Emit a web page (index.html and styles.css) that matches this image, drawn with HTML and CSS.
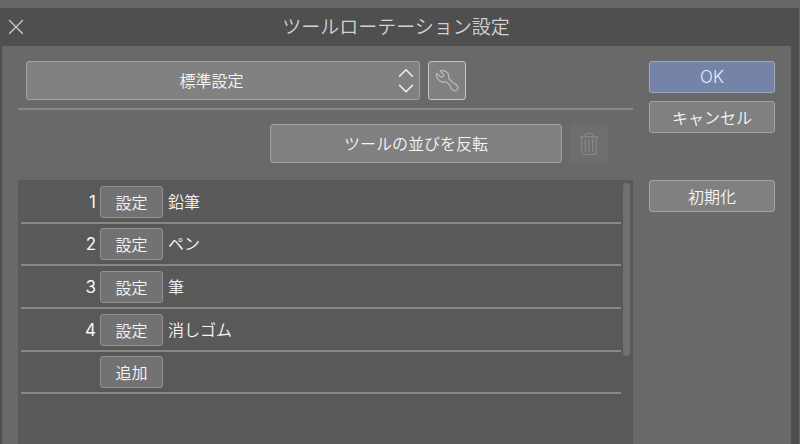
FILE: index.html
```html
<!DOCTYPE html>
<html lang="ja">
<head>
  <meta charset="UTF-8">
  <title>ツールローテーション設定</title>
  <meta name="viewport" content="width=device-width, initial-scale=1.0">
  <link rel="stylesheet" href="styles.css">
</head>
<body>

<div class="dialog">
  <div class="titlebar">
    <svg class="close" width="16" height="16" viewBox="0 0 16 16"><path d="M1.5 1.5L14.5 14.5M14.5 1.5L1.5 14.5"/></svg>
    <h1 class="title">ツールローテーション設定</h1>
  </div>

  <div class="content">
    <div class="main">
      <div class="preset">
        <div class="select">
          <span class="select-text">標準設定</span>
          <svg class="arrows" width="16" height="26" viewBox="0 0 16 26"><path d="M1.5 8.3L8 1.8L14.5 8.3M1.5 17.3L8 23.8L14.5 17.3"/></svg>
        </div>
        <div class="icon-button">
          <svg class="wrench" width="24" height="24" viewBox="0 0 24 24"><path d="M5.1 2.1C8.9 .2 13.7 2.9 13.7 7.4C13.7 8.9 13.5 9.5 14.5 10.4L17.4 13.2C18.2 14 18.9 14 20 14.6L22.4 17C24 19.3 21 23 18.5 21.4L16.2 19.2C15.3 18.2 15.7 17.2 14.8 16.3L11.7 13.3C10.8 12.5 9.8 13 8.4 13C3.9 13 .5 8.4 1.8 4.4L5 7.4C6.6 8.9 9.6 7 8.4 5.3Z"/></svg>
        </div>
      </div>

      <div class="tools">
        <div class="button reverse">ツールの並びを反転</div>
        <div class="icon-button disabled">
          <svg class="trash" width="20" height="24" viewBox="0 0 20 24"><path d="M1 4.9H19M6 4.5V3Q6 1.5 7.5 1.5H12.5Q14 1.5 14 3V4.5M2.7 5V19.5Q2.7 22.5 5.7 22.5H14.3Q17.3 22.5 17.3 19.5V5M6.4 7.5V19M10 7.5V19M13.6 7.5V19"/></svg>
        </div>
      </div>

      <div class="list">
        <div class="rows">
          <div class="row"><span class="num">1</span><span class="button small">設定</span><span class="name">鉛筆</span></div>
          <div class="row"><span class="num">2</span><span class="button small">設定</span><span class="name">ペン</span></div>
          <div class="row"><span class="num">3</span><span class="button small">設定</span><span class="name">筆</span></div>
          <div class="row"><span class="num">4</span><span class="button small">設定</span><span class="name">消しゴム</span></div>
          <div class="row"><span class="num"></span><span class="button small">追加</span></div>
        </div>
        <div class="scrollbar"></div>
      </div>
    </div>

    <div class="side">
      <div class="button ok">OK</div>
      <div class="button">キャンセル</div>
      <div class="button reset">初期化</div>
    </div>
  </div>
</div>

</body>
</html>
```

FILE: styles.css
```css
* {
  box-sizing: border-box;
}

html, body {
  margin: 0;
  height: 444px;
  overflow: hidden;
}

body {
  padding: 8px 1px 0 0;
  background-color: #666;
  color: #f6f6f6;
  font-family: "Noto Sans CJK JP", sans-serif;
  font-size: 16px;
  font-weight: 350;
}

svg {
  display: block;
  fill: none;
  stroke-linecap: round;
  stroke-linejoin: round;
}

.dialog {
  height: 436px;
  padding: 0 8px 0 2px;
  background-color: #4f4f4f;
}

.titlebar {
  display: grid;
  grid-template-columns: 28px 1fr 29px;
  align-items: center;
  height: 38px;
}

.close {
  margin-left: 6px;
  stroke: #ccc;
  stroke-width: 1.3;
}

.title {
  margin: 0;
  padding-bottom: 2px;
  color: #d2d2d2;
  font-size: 19px;
  font-weight: 350;
  line-height: 28px;
  text-align: center;
}

.content {
  display: flex;
  gap: 16px;
  height: 398px;
  padding: 0 16px;
  background-color: #696969;
}

.main {
  display: flex;
  flex-direction: column;
  width: 615px;
}

.preset {
  display: flex;
  gap: 8px;
  height: 64px;
  padding: 15px 0 0 8px;
  border-bottom: 2px solid #888;
}

.select {
  display: flex;
  align-items: center;
  width: 394px;
  height: 39px;
  padding-right: 5px;
  background-color: #818181;
  border: 1px solid #a3a3a3;
  border-radius: 3px;
}

.select-text {
  flex: 1;
  padding: 0 2px 2px 0;
  line-height: 24px;
  text-align: center;
}

.arrows {
  stroke: #eee;
  stroke-width: 1.6;
}

.icon-button {
  display: flex;
  align-items: center;
  justify-content: center;
  width: 38px;
  height: 39px;
  background-color: #808080;
  border: 1px solid #c4c4c4;
  border-radius: 3px;
}

.wrench {
  stroke: #b4b4b4;
  stroke-width: 1.4;
}

.icon-button.disabled {
  background-color: #6e6e6e;
  border-color: #6e6e6e;
}

.trash {
  stroke: #888;
  stroke-width: 1.2;
}

.tools {
  display: flex;
  justify-content: flex-end;
  gap: 8px;
  height: 70px;
  padding: 14px 25px 0 0;
}

.button {
  display: flex;
  align-items: center;
  justify-content: center;
  height: 32px;
  padding-bottom: 1px;
  background-color: #808080;
  border: 1px solid #a3a3a3;
  border-radius: 3px;
  line-height: 24px;
}

.reverse {
  width: 292px;
  height: 39px;
  padding-bottom: 2px;
}

.list {
  display: flex;
  flex: 1;
  gap: 2px;
  padding: 1px 3px 0;
  background-color: #595959;
}

.rows {
  width: 600px;
}

.row {
  display: flex;
  align-items: center;
  height: 42.65px;
  padding-top: 1px;
  border-bottom: 2px solid #878787;
}

.num {
  width: 75px;
  margin-right: 4px;
  font-family: Inter, sans-serif;
  font-size: 17px;
  font-weight: 400;
  text-align: right;
}

.small {
  width: 63px;
  padding-bottom: 0;
  background-color: #727272;
  border-color: #929292;
}

.name {
  margin-left: 5px;
  padding-bottom: 2px;
  line-height: 24px;
}

.scrollbar {
  width: 7px;
  height: 173px;
  margin-top: 2px;
  background-color: #707070;
  border-radius: 4px;
}

.side {
  display: flex;
  flex-direction: column;
  gap: 8px;
  width: 126px;
  padding-top: 15px;
}

.ok {
  padding-bottom: 0;
  background-color: #7583a8;
  border-color: #a0a7b8;
  font-family: Inter, sans-serif;
  font-size: 17px;
  color: #e4ecff;
}

.reset {
  margin-top: 39px;
}
```
